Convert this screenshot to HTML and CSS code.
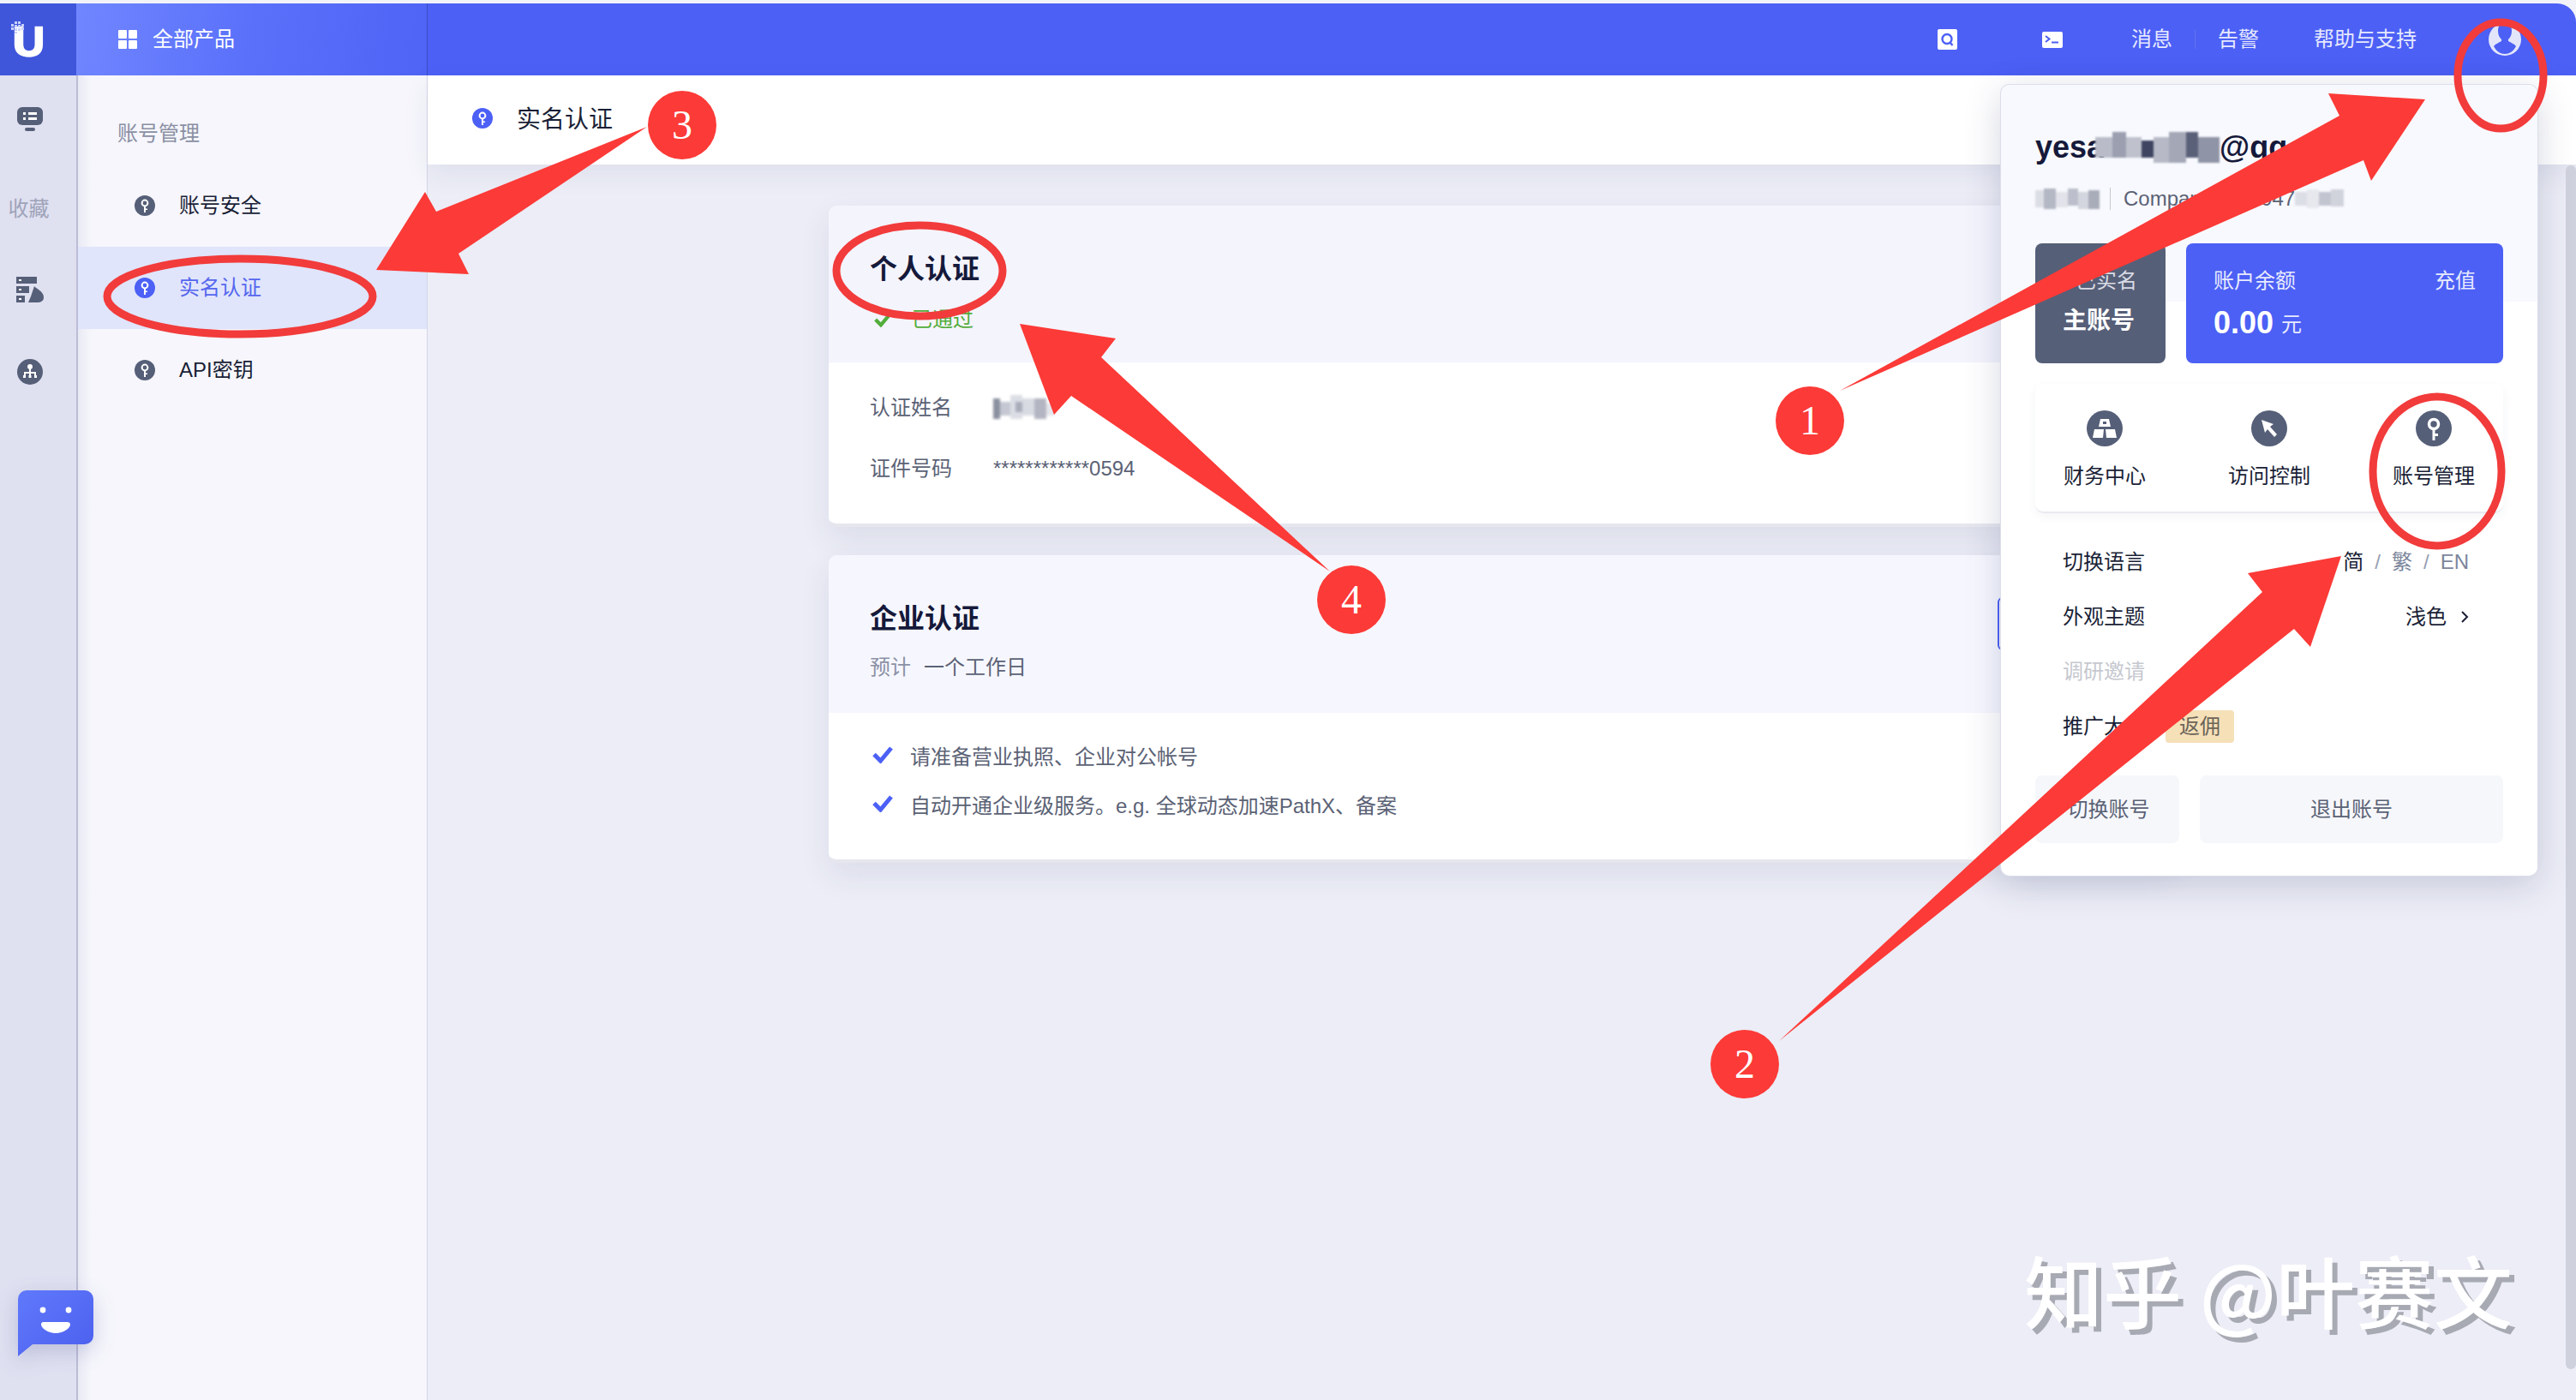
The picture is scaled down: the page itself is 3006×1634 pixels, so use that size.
FILE: index.html
```html
<!DOCTYPE html>
<html lang="zh-CN">
<head>
<meta charset="utf-8">
<title>实名认证</title>
<link rel="stylesheet" href="styles.css">
</head>
<body>
<svg class="defs" width="0" height="0" aria-hidden="true">
  <defs>
    <symbol id="key" viewBox="0 0 24 24">
      <circle cx="12" cy="12" r="12" fill="currentColor"/>
      <circle cx="12" cy="9" r="3.4" fill="none" stroke="#fff" stroke-width="2"/>
      <path d="M11 12h2v8h-2zM13 15.5h2v1.6h-2z" fill="#fff"/>
    </symbol>
    <symbol id="check" viewBox="0 0 24 20">
      <path d="M2 9.5 9.5 17 22 2" fill="none" stroke="currentColor" stroke-width="5"/>
    </symbol>
  </defs>
</svg>

<div class="page">
  <header class="topbar">
    <div class="logo">
      <svg width="40" height="44" viewBox="0 0 40 44">
        <path d="M4 6h11v22c0 6 3 8 7 8s7-2 7-8V6h10v23c0 10-7 15-17 15S4 39 4 29z" fill="#fff" transform="translate(0 0) scale(.95)"/>
        <path d="M0 3h3v3H0zM4 0h3v3H4zM8 0h3v3H8zM4 4h3v3H4zM8 4h3v3H8zM12 3h3v3h-3zM0 7h3v3H0zM4 8h3v3H4zM8 8h3v3H8zM12 7h3v3h-3zM4 12h3v2H4z" fill="#c9d0fb"/>
      </svg>
    </div>
    <div class="products">
      <svg class="grid-icon" width="22" height="22" viewBox="0 0 22 22"><path d="M1 0h8a1 1 0 0 1 1 1v8a1 1 0 0 1-1 1H1a1 1 0 0 1-1-1V1a1 1 0 0 1 1-1zM13 0h8a1 1 0 0 1 1 1v8a1 1 0 0 1-1 1h-8a1 1 0 0 1-1-1V1a1 1 0 0 1 1-1zM1 12h8a1 1 0 0 1 1 1v8a1 1 0 0 1-1 1H1a1 1 0 0 1-1-1v-8a1 1 0 0 1 1-1zM13 12h8a1 1 0 0 1 1 1v8a1 1 0 0 1-1 1h-8a1 1 0 0 1-1-1v-8a1 1 0 0 1 1-1z" fill="#fff"/></svg>
      <span>全部产品</span>
    </div>
    <nav class="tools">
      <svg class="tool-search" width="23" height="24" viewBox="0 0 23 24"><rect width="23" height="24" rx="2" fill="#fff"/><circle cx="11" cy="11.5" r="5.5" fill="none" stroke="#4c60f5" stroke-width="2.4"/><path d="m14.5 15.5 3 3.5" stroke="#4c60f5" stroke-width="2.4"/></svg>
      <svg class="tool-term" width="24" height="19" viewBox="0 0 24 19"><rect width="24" height="19" rx="2" fill="#fff"/><path d="m4 5 4.5 3.5L4 12" fill="none" stroke="#4c60f5" stroke-width="2"/><path d="M11 12.5h8" stroke="#4c60f5" stroke-width="2"/></svg>
      <span class="nav-msg">消息</span>
      <i class="nav-div"></i>
      <span class="nav-alert">告警</span>
      <span class="nav-help">帮助与支持</span>
      <svg class="nav-avatar" width="38" height="38" viewBox="0 0 38 38"><circle cx="19" cy="19" r="19" fill="#e3e6fb"/><path d="M19 0c5 0 8 3 8 9 0 5-2 8-4 10v2c3 2 7 3 9 6-3 6-8 9-13 9s-10-3-13-9c2-3 6-4 9-6v-2c-2-2-4-5-4-10 0-6 3-9 8-9z" fill="#4c60f5"/></svg>
    </nav>
  </header>

  <div class="body">
    <aside class="rail">
      <svg class="rail-monitor" width="30" height="28" viewBox="0 0 30 28"><rect width="30" height="21" rx="6" fill="#565f78"/><rect x="9" y="24" width="12" height="4" rx="2" fill="#565f78"/><path d="M7 6h3v3H7zM13 6h10v3H13zM7 12h3v3H7zM13 12h10v3H13z" fill="#fff"/></svg>
      <span class="rail-label">收藏</span>
      <svg class="rail-server" width="32" height="30" viewBox="0 0 32 30"><path d="M0 0h24v8H0zM0 11h15v8H0zM0 22h10v8H0z" fill="#565f78"/><path d="M3 3h3v2H3zM3 14h3v2H3zM3 25h3v2H3z" fill="#fff"/><path d="M21 11c2 3 11 6 11 13 0 4-3 6-8 6h-10l3-7z" fill="#565f78"/></svg>
      <svg class="rail-org" width="30" height="30" viewBox="0 0 30 30"><circle cx="15" cy="15" r="15" fill="#565f78"/><circle cx="15" cy="9" r="3" fill="#fff"/><path d="M14 11h2v4h6v4h-2v-2h-4v2h-2v-2h-4v2H8v-4h6z" fill="#fff"/><path d="M7 19h3v3H7zM13.500 19h3v3h-3zM20 19h3v3h-3z" fill="#fff"/></svg>
    </aside>

    <aside class="sidebar">
      <div class="side-title">账号管理</div>
      <a class="side-item"><svg class="side-icon" width="24" height="24"><use href="#key"/></svg><span>账号安全</span></a>
      <a class="side-item is-active"><svg class="side-icon" width="24" height="24"><use href="#key"/></svg><span>实名认证</span></a>
      <a class="side-item"><svg class="side-icon" width="24" height="24"><use href="#key"/></svg><span>API密钥</span></a>
    </aside>

    <main class="main">
      <div class="subhead">
        <svg class="sub-icon" width="24" height="24"><use href="#key"/></svg>
        <span>实名认证</span>
      </div>
      <div class="cards">
        <section class="card">
          <div class="card-head head-personal">
            <h2>个人认证</h2>
            <div class="status"><svg class="status-check" width="20" height="17"><use href="#check"/></svg><span>已通过</span></div>
          </div>
          <div class="card-body info">
            <div class="info-row"><span class="info-label">认证姓名</span>
              <svg class="mosaic" width="72" height="28" viewBox="0 0 72 28"><path d="M0 4h8v24H0z" fill="#8b90a0"/><path d="M8 8h12v16H8z" fill="#c5c8d2"/><path d="M20 0h14v28H20z" fill="#dcdee5"/><path d="M26 8h8v12h-8z" fill="#a9adba"/><path d="M34 4h14v20H34z" fill="#d9dbe3"/><path d="M48 4h14v24H48z" fill="#b3b6c2"/><path d="M62 10h10v14H62z" fill="#e5e6eb"/></svg>
            </div>
            <div class="info-row"><span class="info-label">证件号码</span><span class="info-value">************0594</span></div>
          </div>
        </section>

        <section class="card">
          <div class="card-head head-company">
            <h2>企业认证</h2>
            <div class="eta"><span class="eta-label">预计</span><span class="eta-value">一个工作日</span></div>
            <div class="apply"></div>
          </div>
          <div class="card-body list">
            <div class="list-row"><svg class="list-check" width="24" height="20"><use href="#check"/></svg><span>请准备营业执照、企业对公帐号</span></div>
            <div class="list-row"><svg class="list-check" width="24" height="20"><use href="#check"/></svg><span>自动开通企业级服务。e.g. 全球动态加速PathX、备案</span></div>
          </div>
        </section>
      </div>
    </main>
  </div>
</div>

<div class="scrollbar"></div>

<svg class="chat" width="88" height="78" viewBox="0 0 88 78">
  <defs><linearGradient id="chatg" x1="0" y1="0" x2="1" y2="1"><stop offset="0" stop-color="#6079fb"/><stop offset="1" stop-color="#4b5fee"/></linearGradient></defs>
  <path d="M10 0h68a10 10 0 0 1 10 10v43a10 10 0 0 1-10 10H17L0 77V10A10 10 0 0 1 10 0z" fill="url(#chatg)"/>
  <circle cx="29" cy="23" r="3.400" fill="#fff"/><circle cx="59" cy="23" r="3.400" fill="#fff"/>
  <path d="M30 37h27c1 0 4 0 4 3 0 4-8 10-17 10s-17-6-17-10c0-3 2-3 3-3z" fill="#fff"/>
</svg>

<div class="popup">
  <div class="email">yesa<svg class="mosaic-mail" width="145" height="36" viewBox="0 0 145 36"><path d="M0 6h20v24H0z" fill="#b9bcc8"/><path d="M20 0h16v30H20z" fill="#9b9fb0"/><path d="M36 6h18v24H36z" fill="#bfc2cd"/><path d="M54 10h14v20H54z" fill="#3f4560"/><path d="M68 6h18v30H68z" fill="#b7bac6"/><path d="M86 0h20v36H86z" fill="#a3a7b6"/><path d="M106 0h14v30h-14z" fill="#5a6078"/><path d="M120 6h25v30h-25z" fill="#8f94a6"/></svg>@qq.com</div>
  <div class="company">
    <svg class="mosaic-co" width="75" height="24" viewBox="0 0 75 24"><path d="M0 2h10v20H0z" fill="#dcdee6"/><path d="M10 0h14v24H10z" fill="#b4b7c4"/><path d="M24 4h14v18H24z" fill="#e2e3ea"/><path d="M38 0h12v20H38z" fill="#bcbfcb"/><path d="M50 4h12v20H50z" fill="#d4d6df"/><path d="M62 2h13v22H62z" fill="#a9adba"/></svg>
    <i class="co-div"></i>
    <span>Company ID: 5047</span>
    <svg class="mosaic-co2" width="57" height="22" viewBox="0 0 57 22"><path d="M0 3h14v16H0z" fill="#dcdee6"/><path d="M14 0h14v22H14z" fill="#e7e8ee"/><path d="M28 3h14v16H28z" fill="#c2c5d0"/><path d="M42 0h15v20H42z" fill="#d1d3dc"/></svg>
  </div>
  <div class="tiles">
    <div class="tile tile-dark">
      <div class="tile-verified"><svg width="14" height="12"><use href="#check"/></svg><span>已实名</span></div>
      <strong>主账号</strong>
    </div>
    <div class="tile tile-blue">
      <div class="tile-line"><span>账户余额</span><span>充值</span></div>
      <div class="balance"><strong>0.00</strong><span>元</span></div>
    </div>
  </div>
  <div class="shortcuts">
    <a class="shortcut">
      <svg width="42" height="42" viewBox="0 0 42 42"><circle cx="21" cy="21" r="21" fill="#565f78"/><path d="M16 10h10l2 9H14zM9 22h11l-1 10H7zM22 22h11l2 10H23z" fill="#fff"/><path d="M19 13h4v3h-4z" fill="#565f78"/></svg>
      <span>财务中心</span>
    </a>
    <a class="shortcut">
      <svg width="42" height="42" viewBox="0 0 42 42"><circle cx="21" cy="21" r="21" fill="#565f78"/><path d="M12 11 26 16l-4 3 8 9-3 3-8-9-3 4z" fill="#fff"/></svg>
      <span>访问控制</span>
    </a>
    <a class="shortcut">
      <svg width="42" height="42" viewBox="0 0 42 42"><circle cx="21" cy="21" r="21" fill="#565f78"/><circle cx="21" cy="16" r="5.500" fill="none" stroke="#fff" stroke-width="3.500"/><path d="M19.500 21h3v14h-3zM22 27h4v3h-4z" fill="#fff"/></svg>
      <span>账号管理</span>
    </a>
  </div>
  <div class="settings">
    <div class="set-row"><span>切换语言</span><span class="langs"><b>简</b><i>/</i><em>繁</em><i>/</i><em>EN</em></span></div>
    <div class="set-row"><span>外观主题</span><span class="theme">浅色<svg width="10" height="16" viewBox="0 0 10 16"><path d="m2 2 6 6-6 6" fill="none" stroke="#1a1f36" stroke-width="2"/></svg></span></div>
    <div class="set-row is-muted"><span>调研邀请</span></div>
    <div class="set-row"><span class="promo">推广大使<span class="badge">返佣</span></span></div>
  </div>
  <div class="actions">
    <button class="btn btn-switch" type="button">切换账号</button>
    <button class="btn btn-exit" type="button">退出账号</button>
  </div>
</div>

<div class="watermark">知乎 @叶赛文</div>

<svg class="marks" width="3006" height="1634" viewBox="0 0 3006 1634">
  <g fill="none" stroke="#f23b3b" stroke-width="9">
    <ellipse cx="2918" cy="88" rx="50" ry="62"/>
    <ellipse cx="2844" cy="550" rx="75" ry="87"/>
    <ellipse cx="280" cy="346" rx="155" ry="44"/>
    <ellipse cx="1073" cy="316" rx="97" ry="53"/>
  </g>
  <g fill="#fc3a37">
    <polygon points="2147,456 2730,135 2717,109 2830,116 2767,211 2758,187"/>
    <polygon points="2076,1215 2640,691 2623,669 2732,649 2696,755 2677,734"/>
    <polygon points="755,148 509,247 496,224 439,315 547,320 535,296"/>
    <polygon points="1552,667 1285,417 1302,395 1190,378 1230,484 1250,462"/>
    <circle cx="2112" cy="491" r="40"/>
    <circle cx="2036" cy="1242" r="40"/>
    <circle cx="796" cy="146" r="40"/>
    <circle cx="1577" cy="700" r="40"/>
  </g>
  <g class="mark-num">
    <text x="2112" y="507">1</text>
    <text x="2036" y="1258">2</text>
    <text x="796" y="162">3</text>
    <text x="1577" y="716">4</text>
  </g>
</svg>
</body>
</html>
```
FILE: styles.css
```css
* { box-sizing: border-box; }
html, body { margin: 0; height: 100%; }
body {
  width: 3006px;
  height: 1634px;
  overflow: hidden;
  position: relative;
  background: #f2f3f8;
  color: #1a1f36;
  font-family: "Liberation Sans", "Noto Sans CJK SC", sans-serif;
  font-size: 24px;
  line-height: 32px;
}
.defs { position: absolute; }
.page { display: flex; flex-direction: column; height: 100%; padding-top: 4px; }

/* top bar */
.topbar {
  display: flex;
  height: 84px;
  flex: none;
  background: #4c60f5;
  color: #fff;
  border-top-right-radius: 22px;
}
.logo { width: 89px; background: #3f56db; padding: 21px 0 0 13px; }
.logo svg { display: block; }
.products {
  width: 410px;
  display: flex;
  align-items: center;
  gap: 18px;
  padding-left: 49px;
  background: linear-gradient(100deg, #7086ff 0%, #5a70fa 50%, #4f63f5 100%);
  border-right: 1px solid #3b4cc4;
}
.tools { flex: 1; display: flex; align-items: center; justify-content: flex-end; padding-right: 64px; color: #e6e9ff; }
.tool-term { margin-left: 99px; }
.nav-msg { margin-left: 80px; }
.nav-div { width: 1px; height: 22px; background: #6073ee; margin: 0 26px; }
.nav-help { margin-left: 64px; }
.nav-avatar { margin-left: 84px; }

.body { flex: 1; display: flex; min-height: 0; }

/* left rail */
.rail {
  width: 91px;
  background: #dfe0f0;
  border-right: 2px solid #bcbdd6;
  display: flex;
  flex-direction: column;
  align-items: center;
}
.rail-monitor { margin: 37px 0 0 -19px; }
.rail-label { margin: 75px 0 0 -22px; color: #9ea3b9; }
.rail-server { margin: 63px 0 0 -19px; }
.rail-org { margin: 66px 0 0 -19px; }

/* side menu */
.sidebar {
  width: 408px;
  background: linear-gradient(90deg, #eaeaf5 0, #f6f6fc 16px);
  border-right: 1px solid #d3d5e6;
  padding-top: 52px;
}
.side-title { color: #8a90a3; padding-left: 46px; margin-bottom: 20px; }
.side-item { display: flex; align-items: center; gap: 28px; height: 96px; padding-left: 66px; color: #1a1f36; }
.side-icon { color: #565f78; }
.is-active { background: #e0e5fb; color: #5566ee; }
.is-active .side-icon { color: #4c60f5; }

/* main */
.main { flex: 1; min-width: 0; background: #ecedf6; display: flex; flex-direction: column; }
.subhead {
  height: 104px;
  flex: none;
  background: #fff;
  display: flex;
  align-items: center;
  gap: 28px;
  padding: 0 0 0 52px;
  font-size: 28px;
  box-shadow: 0 10px 30px rgba(40, 50, 100, .07);
}
.sub-icon { color: #4c60f5; margin-top: -4px; }
.cards { width: 1570px; margin: 48px 0 0 468px; display: flex; flex-direction: column; gap: 33px; }
.card {
  background: #fff;
  border-radius: 10px;
  overflow: hidden;
  border-bottom: 4px solid #e6e7ee;
  box-shadow: 0 14px 36px rgba(40, 50, 100, .09);
}
.card-head { height: 184px; padding: 54px 48px 0; position: relative; }
.head-personal { height: 183px; background: #f4f4fd; }
.head-company { background: #f6f7fe; }
.card-head h2 { margin: 0; font-size: 32px; line-height: 40px; font-weight: 700; color: #15193a; }
.status { display: flex; align-items: center; gap: 24px; margin-top: 23px; padding-left: 5px; color: #52ad3a; }
.eta { display: flex; gap: 15px; margin-top: 21px; }
.eta-label { color: #8b91a5; }
.eta-value { color: #5b6275; }
.apply { position: absolute; left: 1364px; top: 49px; width: 150px; height: 62px; background: #fff; border: 2px solid #4c60f5; border-radius: 6px; }
.info { height: 188px; padding: 37px 48px 0; display: flex; flex-direction: column; gap: 39px; color: #5b6275; }
.info-row { display: flex; align-items: center; gap: 48px; }
.list { height: 171px; padding: 36px 48px 0 51px; display: flex; flex-direction: column; gap: 25px; color: #5b6275; }
.list-row { display: flex; align-items: center; gap: 20px; }
.list-check { color: #4c60f5; margin-top: -6px; }
.mosaic { margin-top: -2px; filter: blur(1.5px); }
.mosaic-mail, .mosaic-co, .mosaic-co2 { filter: blur(1.2px); }

.scrollbar { position: absolute; left: 2994px; top: 193px; width: 12px; height: 1405px; background: #cfd1dd; border-radius: 6px; }
.chat { position: absolute; left: 21px; top: 1506px; filter: drop-shadow(0 8px 12px rgba(60, 70, 140, .22)); }

/* account popover */
.popup {
  position: absolute;
  left: 2335px;
  top: 99px;
  width: 626px;
  height: 923px;
  padding: 51px 40px 0;
  border-radius: 10px;
  background: linear-gradient(#f8f9fe 253px, #fff 253px);
  box-shadow: 0 0 0 1px #dcdeea, 0 10px 44px rgba(40, 50, 100, .2);
}
.email { font-size: 36px; line-height: 44px; font-weight: 700; color: #15193a; white-space: nowrap; overflow: hidden; display: flex; align-items: center; }
.mosaic-mail { margin-left: -10px; flex: none; }
.company { display: flex; align-items: center; margin-top: 22px; color: #5b6275; white-space: nowrap; height: 32px; }
.co-div { width: 1px; height: 26px; background: #c4c7d3; margin: 0 15px 0 12px; }
.mosaic-co2 { margin-left: 0; }
.tiles { display: flex; gap: 24px; margin-top: 36px; height: 140px; color: #fff; }
.tile { border-radius: 8px; }
.tile-dark { width: 152px; background: #565f78; padding: 28px 0 0 32px; }
.tile-dark strong { display: block; margin-top: 15px; font-size: 28px; line-height: 32px; }
.tile-verified { display: flex; align-items: center; gap: 1px; color: #d9dbe4; }
.tile-verified svg { color: #f4e2b5; }
.tile-blue { flex: 1; background: #4c60f5; padding: 28px 32px 0; }
.tile-line { display: flex; justify-content: space-between; color: #e8ebff; }
.balance { display: flex; align-items: flex-end; gap: 9px; margin-top: 13px; line-height: 36px; }
.balance strong { font-size: 36px; line-height: 40px; }
.balance span { color: #e8ebff; }
.shortcuts {
  display: flex;
  justify-content: center;
  gap: 96px;
  height: 151px;
  margin-top: 24px;
  padding-top: 31px;
  background: #fff;
  border-radius: 10px;
  border-bottom: 2px solid #e9eaf0;
  box-shadow: 0 4px 12px rgba(40, 50, 100, .05);
}
.shortcut { width: 96px; display: flex; flex-direction: column; align-items: center; gap: 19px; white-space: nowrap; color: #1a1f36; }
.settings { margin-top: 25px; padding: 0 40px 0 32px; }
.set-row { height: 64px; display: flex; align-items: center; justify-content: space-between; }
.is-muted { color: #c6c8cf; }
.langs { display: flex; gap: 13px; }
.langs b { font-weight: 400; }
.langs i { font-style: normal; color: #98a0b3; }
.langs em { font-style: normal; color: #7c869c; }
.theme { display: flex; align-items: center; gap: 16px; }
.promo { display: flex; align-items: center; gap: 24px; }
.badge { padding: 3px 16px; height: 38px; background: #f6e0b8; color: #6b6458; border-radius: 4px; }
.actions { display: flex; gap: 24px; margin-top: 25px; }
.btn { height: 79px; border: 0; border-radius: 8px; background: #f6f7fb; color: #5a6275; font: inherit; }
.btn-switch { width: 168px; padding: 0 0 0 3px; }
.btn-exit { flex: 1; }

/* overlays */
.watermark {
  position: absolute;
  left: 2362px;
  top: 1439px;
  font-family: "Noto Sans CJK SC", sans-serif;
  font-size: 92px;
  line-height: 130px;
  font-weight: 500;
  color: #fff;
  white-space: nowrap;
  text-shadow: 6px 6px 0 #a8aab3;
}
.marks { position: absolute; left: 0; top: 0; pointer-events: none; }
.mark-num { font-family: "Liberation Serif", serif; font-size: 48px; fill: #fff; text-anchor: middle; }
```
